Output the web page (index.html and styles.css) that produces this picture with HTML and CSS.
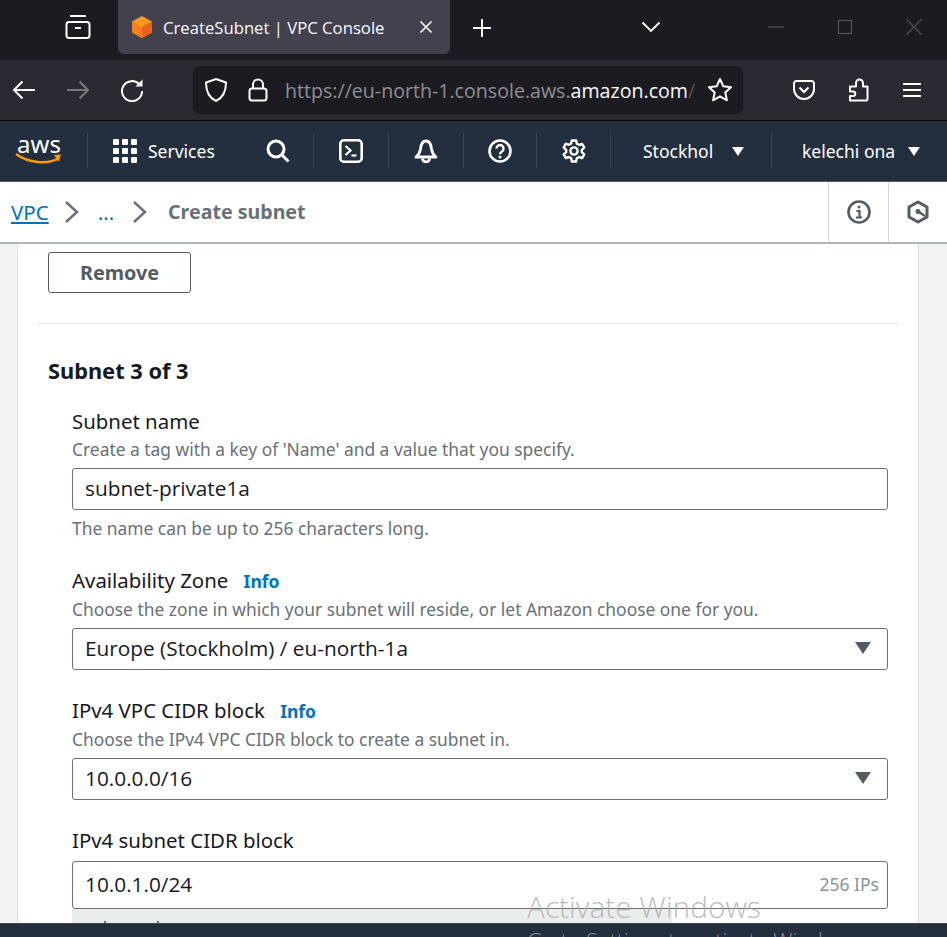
FILE: index.html
```html
<!DOCTYPE html>
<html lang="en">
<head>
    <meta charset="UTF-8">
    <title>CreateSubnet | VPC Console</title>
    <link rel="stylesheet" href="styles.css">
</head>
<body>
    <div class="browser-tabs">
        <svg class="tabs-icon" width="26" height="26" viewBox="0 0 26 26" fill="none" stroke="#fff" stroke-width="2"><path d="M5 2h16"/><rect x="1.500" y="8" width="23" height="16" rx="2.500"/><path d="M10 14h6"/></svg>
        <div class="tab">
            <svg width="22" height="24" viewBox="0 0 22 24"><path d="M11 1l10 5.500v11L11 23 1 17.500v-11z" fill="#f7981f"/><path d="M11 12l10-5.500v11L11 23z" fill="#e8621f"/><path d="M11 12v11L1 17.500v-11z" fill="#f47f1c"/></svg>
            <span class="tab-title">CreateSubnet | VPC Console</span>
            <svg width="14" height="14" viewBox="0 0 14 14" stroke="#fff" stroke-width="1.600"><path d="M1.500 1.500l11 11M12.500 1.500l-11 11"/></svg>
        </div>
        <svg class="new-tab" width="20" height="20" viewBox="0 0 20 20" stroke="#fff" stroke-width="2"><path d="M10 1v18M1 10h18"/></svg>
        <svg class="tab-list" width="20" height="12" viewBox="0 0 20 12" fill="none" stroke="#fff" stroke-width="1.800"><path d="M1.500 1.500L10 10l8.500-8.500"/></svg>
        <div class="window-btns">
            <svg width="16" height="16" viewBox="0 0 16 16" stroke="#55565b" stroke-width="1"><path d="M0 8h16"/></svg>
            <svg width="16" height="16" viewBox="0 0 16 16" fill="none" stroke="#55565b" stroke-width="1.200"><rect x="1.500" y="1.500" width="13" height="13"/></svg>
            <svg width="16" height="16" viewBox="0 0 16 16" stroke="#55565b" stroke-width="1.200"><path d="M0 0l16 16M16 0L0 16"/></svg>
        </div>
    </div>

    <div class="browser-nav">
        <svg class="nav-back" width="24" height="20" viewBox="0 0 24 20" fill="none" stroke="#fff" stroke-width="2"><path d="M23 10H2M10.500 1.500L2 10l8.500 8.500"/></svg>
        <svg class="nav-fwd" width="24" height="20" viewBox="0 0 24 20" fill="none" stroke="#77777c" stroke-width="2"><path d="M1 10h21M13.500 1.500L22 10l-8.500 8.500"/></svg>
        <svg class="nav-reload" width="24" height="24" viewBox="0 0 24 24" fill="none" stroke="#fff" stroke-width="2"><path d="M19.500 6.500A10 10 0 1 0 22 13"/><path d="M22.500 1.500v7h-7z" fill="#fff" stroke="none"/></svg>
        <div class="url-bar">
            <svg class="url-shield" width="24" height="26" viewBox="0 0 24 26" fill="none" stroke="#fff" stroke-width="2"><path d="M12 2l10 3.500c0 9-2.500 15-10 18.500C4.500 20.500 2 14.500 2 5.500z"/></svg>
            <svg class="url-lock" width="20" height="24" viewBox="0 0 20 24" fill="none" stroke="#fff" stroke-width="2"><rect x="1.500" y="10.500" width="17" height="12" rx="2.500"/><path d="M5 10.500V6.500a5 5 0 0 1 10 0v4"/></svg>
            <div class="url-text">https://eu-north-1.console.aws.<b>amazon.com</b><span class="url-fade">/</span></div>
            <svg class="url-star" width="26" height="26" viewBox="0 0 26 26" fill="none" stroke="#fff" stroke-width="2" stroke-linejoin="round"><path d="M13 2l3.300 7.300 7.700.9-5.700 5.300 1.600 7.800L13 19.300l-6.900 4 1.600-7.800L2 10.200l7.700-.9z"/></svg>
        </div>
        <svg class="nav-pocket" width="22" height="20" viewBox="0 0 22 20" fill="none" stroke="#fff" stroke-width="2"><path d="M1 3.500A2.500 2.500 0 0 1 3.500 1h15A2.500 2.500 0 0 1 21 3.500V9a10 10 0 0 1-20 0z"/><path d="M6.500 7.500L11 12l4.500-4.500"/></svg>
        <svg class="nav-ext" width="22" height="24" viewBox="0 0 22 24" fill="none" stroke="#fff" stroke-width="2" stroke-linejoin="round"><path d="M3 22.500h15a1.500 1.500 0 0 0 1.500-1.500V8.500H15V5a3.500 3.500 0 0 0-7 0v3.500H2v5h3a2.200 2.200 0 0 1 0 4.500H2v4.500z"/></svg>
        <svg class="nav-menu" width="18" height="16" viewBox="0 0 18 16" stroke="#fff" stroke-width="2"><path d="M0 2h18M0 8h18M0 14h18"/></svg>
    </div>

    <header class="aws-bar">
        <div class="aws-logo">
            <span class="aws-word">aws</span>
            <svg width="48" height="12" viewBox="0 0 48 12" fill="none"><path d="M1 1c12 9 32 11 43 4" stroke="#f90" stroke-width="2.400"/><path d="M39 2l7-.5-2.500 7z" fill="#f90"/></svg>
        </div>
        <i class="sep"></i>
        <svg class="grid-icon" width="24" height="24" viewBox="0 0 24 24" fill="#fff"><rect x="0" y="0" width="6" height="6" rx="1"/><rect x="9" y="0" width="6" height="6" rx="1"/><rect x="18" y="0" width="6" height="6" rx="1"/><rect x="0" y="9" width="6" height="6" rx="1"/><rect x="9" y="9" width="6" height="6" rx="1"/><rect x="18" y="9" width="6" height="6" rx="1"/><rect x="0" y="18" width="6" height="6" rx="1"/><rect x="9" y="18" width="6" height="6" rx="1"/><rect x="18" y="18" width="6" height="6" rx="1"/></svg>
        <span class="services">Services</span>
        <svg class="search-icon" width="24" height="24" viewBox="0 0 24 24" fill="none" stroke="#fff" stroke-width="3"><circle cx="10" cy="10" r="8"/><path d="M16 16l6.500 6.500"/></svg>
        <i class="sep"></i>
        <svg class="bar-icon" width="24" height="24" viewBox="0 0 24 24" fill="none" stroke="#fff" stroke-width="2.600"><rect x="1.300" y="1.300" width="21.400" height="21.400" rx="3.500"/><path d="M6.500 7l5 4.500-5 4.500" stroke-width="2.200"/><path d="M12.500 16.500h5" stroke-width="2.200"/></svg>
        <i class="sep"></i>
        <svg class="bar-icon" width="24" height="24" viewBox="0 0 24 24" fill="none" stroke="#fff" stroke-width="2.800"><path d="M2 18h20c-3-2.500-4-4.500-4.500-8C17 5 15 2 12 2S7 5 6.500 10C6 13.500 5 15.500 2 18z" stroke-linejoin="round"/><path d="M8.500 19.500a3.500 3.500 0 0 0 7 0"/></svg>
        <i class="sep"></i>
        <svg class="bar-icon help-icon" width="24" height="24" viewBox="0 0 24 24" fill="none" stroke="#fff" stroke-width="2.600"><circle cx="12" cy="12" r="10.500"/><path d="M8.500 9.500a3.500 3.500 0 1 1 5.500 2.900c-1.300.8-2 1.500-2 2.800" stroke-width="2.400"/><circle cx="12" cy="18" r="1.500" fill="#fff" stroke="none"/></svg>
        <i class="sep"></i>
        <svg class="bar-icon gear-icon" width="24" height="24" viewBox="0 0 24 24" fill="none" stroke="#fff" stroke-width="2.400" stroke-linejoin="round"><path d="M9.800 1.500h4.400l.6 3.200 2.300 1.300 3-1.100 2.200 3.800-2.500 2.100v2.400l2.500 2.100-2.200 3.800-3-1.100-2.300 1.300-.6 3.200H9.800l-.6-3.200-2.300-1.300-3 1.100-2.200-3.800 2.500-2.100v-2.400L1.700 8.500l2.200-3.800 3 1.100 2.300-1.300z"/><circle cx="12" cy="12" r="3.600"/></svg>
        <i class="sep"></i>
        <span class="menu-text region">Stockhol</span>
        <i class="caret"></i>
        <i class="sep"></i>
        <span class="menu-text user">kelechi ona</span>
        <i class="caret"></i>
    </header>

    <nav class="crumbs">
        <a class="crumb-link">VPC</a>
        <svg width="16" height="24" viewBox="0 0 16 24" fill="none" stroke="#687078" stroke-width="2.400"><path d="M2 2l11 10L2 22"/></svg>
        <a class="crumb-more">...</a>
        <svg width="16" height="24" viewBox="0 0 16 24" fill="none" stroke="#687078" stroke-width="2.400"><path d="M2 2l11 10L2 22"/></svg>
        <span class="crumb-current">Create subnet</span>
        <div class="crumb-tools">
            <div class="tool-cell">
                <svg width="24" height="24" viewBox="0 0 24 24" fill="none" stroke="#545b64" stroke-width="2.600"><circle cx="12" cy="12" r="10.500"/><path d="M9.500 11h3v6M9 17.500h6" stroke-width="2.200"/><circle cx="12" cy="7" r="1.500" fill="#545b64" stroke="none"/></svg>
            </div>
            <div class="tool-cell">
                <svg width="22" height="24" viewBox="0 0 22 24" fill="none" stroke="#545b64" stroke-width="3"><path d="M11 2l9 5v10l-9 5-9-5V7z" stroke-linejoin="round"/><circle cx="11" cy="11.500" r="2.500" fill="#545b64" stroke="none"/><path d="M12 12l6 4" stroke-width="2.500"/></svg>
            </div>
        </div>
    </nav>

    <main class="content">
        <section class="card">
            <button class="btn-remove">Remove</button>
            <hr class="divider">
            <h2 class="subnet-title">Subnet 3 of 3</h2>

            <div class="fields">
                <div class="field field-name">
                    <div class="label">Subnet name</div>
                    <div class="hint">Create a tag with a key of 'Name' and a value that you specify.</div>
                    <div class="input">subnet-private1a</div>
                    <div class="hint hint-below">The name can be up to 256 characters long.</div>
                </div>

                <div class="field field-select">
                    <div class="label">Availability Zone <a class="info">Info</a></div>
                    <div class="hint">Choose the zone in which your subnet will reside, or let Amazon choose one for you.</div>
                    <div class="input">Europe (Stockholm) / eu-north-1a<i class="select-caret"></i></div>
                </div>

                <div class="field field-select">
                    <div class="label">IPv4 VPC CIDR block <a class="info">Info</a></div>
                    <div class="hint">Choose the IPv4 VPC CIDR block to create a subnet in.</div>
                    <div class="input">10.0.0.0/16<i class="select-caret"></i></div>
                </div>

                <div class="field">
                    <div class="label">IPv4 subnet CIDR block</div>
                    <div class="input input-tall">10.0.1.0/24<span class="ips">256 IPs</span></div>
                    <div class="cidr-tools"><i></i><i></i></div>
                </div>
            </div>
        </section>
    </main>

    <footer class="bottom-bar"></footer>

    <div class="activate">
        <div class="activate-title">Activate Windows</div>
        <div class="activate-sub">Go to Settings to activate Windows.</div>
    </div>
</body>
</html>
```

FILE: styles.css
```css
html, body {
    margin: 0;
    height: 937px;
    overflow: hidden;
}

body {
    font-family: "Noto Sans", sans-serif;
    background-color: #f2f3f3;
    color: #16191f;
    display: flex;
    flex-direction: column;
    position: relative;
}

svg {
    display: block;
    flex: none;
}

/* browser chrome */
.browser-tabs {
    height: 60px;
    flex: none;
    background-color: #1c1b22;
    display: flex;
    align-items: flex-start;
    box-sizing: border-box;
    padding-left: 65px;
}

.tabs-icon {
    margin-top: 14px;
}

.tab {
    width: 332px;
    height: 54px;
    margin-left: 27px;
    background-color: #42414d;
    border-radius: 0 0 6px 6px;
    display: flex;
    align-items: center;
    box-sizing: border-box;
    padding: 0 17px 0 13px;
    color: #fbfbfe;
    font-family: "Open Sans", sans-serif;
    font-size: 16.700px;
}

.tab-title {
    flex: 1;
    margin-left: 10px;
}

.new-tab {
    margin: 18px 0 0 22px;
}

.tab-list {
    margin: 21px 0 0 149px;
}

.window-btns {
    margin-left: auto;
    display: flex;
    gap: 53px;
    align-items: center;
    padding: 19px 25px 0 0;
}

.browser-nav {
    height: 61px;
    flex: none;
    background-color: #2b2a33;
    display: flex;
    align-items: center;
    box-sizing: border-box;
    border-bottom: 1px solid #0c0c0d;
}

.nav-back {
    margin-left: 12px;
}

.nav-fwd {
    margin-left: 30px;
}

.nav-reload {
    margin-left: 30px;
}

.url-bar {
    width: 550px;
    height: 48px;
    margin-left: 49px;
    background-color: #1c1b22;
    border-radius: 6px;
    display: flex;
    align-items: center;
    box-sizing: border-box;
    padding: 0 10px 0 11px;
}

.url-lock {
    margin-left: 20px;
}

.url-text {
    margin-left: 17px;
    font-family: "Open Sans", sans-serif;
    font-size: 19.600px;
    color: #8f8f94;
    white-space: nowrap;
}

.url-text b {
    font-weight: 400;
    color: #fbfbfe;
}

.url-fade {
    color: #55555c;
}

.url-star {
    margin-left: auto;
}

.nav-pocket {
    margin-left: 50px;
}

.nav-ext {
    margin-left: 33px;
}

.nav-menu {
    margin-left: 33px;
}

/* console header */
.aws-bar {
    height: 61px;
    flex: none;
    background-color: #232f3e;
    border-bottom: 1px solid #545b64;
    display: flex;
    align-items: center;
    box-sizing: border-box;
    color: #fff;
    padding-left: 15px;
}

.aws-logo {
    width: 48px;
    margin-top: -4px;
}

.aws-word {
    display: block;
    font-size: 24px;
    line-height: 19px;
    text-align: center;
}

.sep {
    width: 1px;
    height: 34px;
    background-color: #414750;
    flex: none;
}

.aws-logo + .sep {
    margin-left: 24px;
}

.grid-icon {
    margin-left: 25px;
}

.services {
    font-size: 17.500px;
    width: 68px;
    margin-left: 11px;
    white-space: nowrap;
}

.search-icon {
    margin: 0 23px 0 50px;
}

.bar-icon {
    margin: 0 25px;
}

.help-icon {
    margin: 0 24px;
}

.gear-icon {
    margin: 0 24px 0 25px;
}

.menu-text {
    font-size: 17.500px;
    white-space: nowrap;
}

.region {
    width: 73px;
    margin-left: 32px;
    margin-right: 16px;
}

.caret {
    width: 0;
    height: 0;
    border-left: 6.500px solid transparent;
    border-right: 6.500px solid transparent;
    border-top: 9px solid #fff;
    margin-right: 27px;
    flex: none;
}

.user {
    width: 92px;
    margin-left: 30px;
    margin-right: 14px;
}

/* breadcrumbs */
.crumbs {
    height: 62px;
    flex: none;
    background-color: #fff;
    border-bottom: 2px solid #aab7b8;
    display: flex;
    align-items: center;
    box-sizing: border-box;
    padding-left: 11px;
}

.crumb-link {
    width: 38px;
    font-size: 20.500px;
    color: #0073bb;
    text-decoration: underline;
    margin-right: 15px;
}

.crumb-more {
    width: 15px;
    font-size: 20px;
    color: #0073bb;
    margin: 0 19px 0 18px;
}

.crumb-current {
    font-size: 19.600px;
    font-weight: 700;
    color: #687078;
    margin: 0 0 2px 20px;
}

.crumb-tools {
    margin-left: auto;
    display: flex;
    height: 100%;
}

.tool-cell {
    width: 60px;
    box-sizing: border-box;
    border-left: 1px solid #d5dbdb;
    display: flex;
    align-items: center;
    justify-content: center;
}

.tool-cell + .tool-cell {
    width: 59px;
}

/* form */
.content {
    flex: 1;
    min-height: 0;
    padding: 0 28px 0 17px;
    overflow: hidden;
}

.card {
    background-color: #fff;
    border-left: 1px solid #d5dbdb;
    border-right: 1px solid #d5dbdb;
    padding: 8px 30px 0 30px;
}

.btn-remove {
    display: block;
    width: 143px;
    height: 41px;
    background-color: #fff;
    border: 1px solid #545b64;
    border-radius: 3px;
    color: #545b64;
    font-family: inherit;
    font-size: 19.800px;
    font-weight: 700;
    padding: 0;
}

.divider {
    border: 0;
    border-top: 1px solid #eaeded;
    margin: 30px -12px 0 -12px;
}

.subnet-title {
    font-size: 21.800px;
    font-weight: 700;
    margin: 31px 0 0 0;
    line-height: 32px;
}

.fields {
    padding-left: 24px;
    margin-top: 21px;
}

.field-name {
    margin-bottom: 26px;
}

.field-select {
    margin-bottom: 27px;
}

.label {
    font-size: 20.400px;
    line-height: 26px;
    margin-bottom: 2px;
}

.info {
    color: #0073bb;
    font-size: 17.500px;
    font-weight: 700;
    margin-left: 10px;
}

.hint {
    font-size: 17.400px;
    line-height: 26px;
    color: #687078;
}

.hint-below {
    margin-top: 5px;
}

.input {
    height: 42px;
    margin-top: 6px;
    border: 1px solid #687078;
    border-radius: 3px;
    background-color: #fff;
    box-sizing: border-box;
    display: flex;
    align-items: center;
    justify-content: space-between;
    padding: 0 16px 2px 12px;
    font-family: "Open Sans", sans-serif;
    font-size: 20.800px;
}

.input-tall {
    height: 48px;
    margin-top: 8px;
    padding-right: 8px;
}

.select-caret {
    width: 0;
    height: 0;
    border-left: 8px solid transparent;
    border-right: 8px solid transparent;
    border-top: 12px solid #545b64;
}

.ips {
    font-family: "Noto Sans", sans-serif;
    font-size: 17.500px;
    color: #879596;
}

.cidr-tools {
    background-color: #eaeded;
    width: 600px;
    height: 14px;
    display: flex;
    align-items: flex-end;
    gap: 51px;
    padding-left: 32px;
    box-sizing: border-box;
}

.cidr-tools i {
    width: 2px;
    height: 2px;
    background-color: #687078;
}

.bottom-bar {
    height: 14px;
    background-color: #232f3e;
    border-top: 1px solid #414750;
    box-sizing: border-box;
    flex: none;
}

.activate {
    position: absolute;
    left: 527px;
    top: 887px;
    color: rgba(170, 170, 170, 0.800);
    font-size: 29.800px;
    line-height: 39px;
    white-space: nowrap;
    font-family: "Open Sans", sans-serif;
    font-weight: 300;
}

.activate-sub {
    font-size: 21.500px;
    line-height: 26px;
    margin-top: 2px;
}
```
